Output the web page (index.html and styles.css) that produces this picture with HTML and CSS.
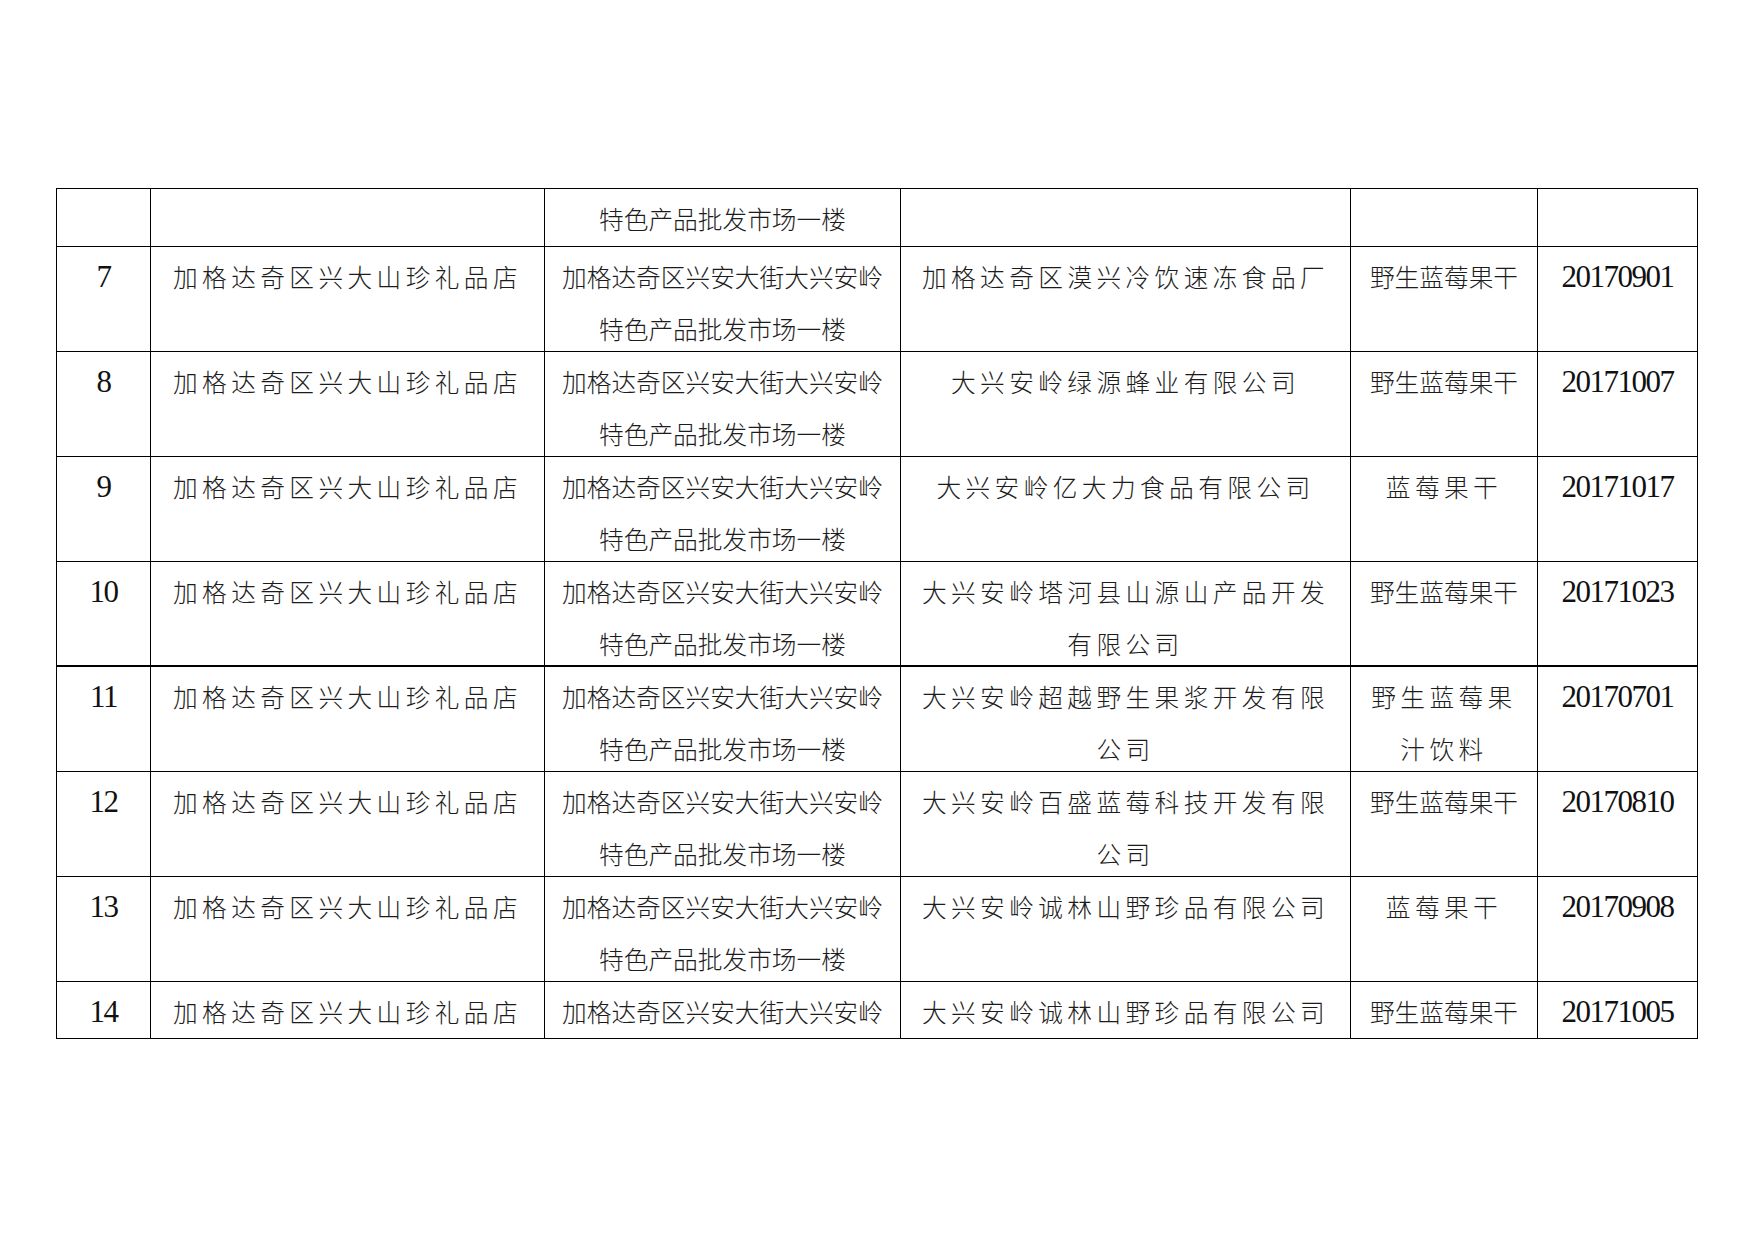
FILE: index.html
```html
<!DOCTYPE html>
<html lang="zh-CN">
<head>
<meta charset="utf-8">
<title>抽检信息表</title>
<link rel="stylesheet" href="styles.css">
</head>
<body>
<div class="page">
<div class="grid">
  <div class="cell num"></div>
  <div class="cell sp"></div>
  <div class="cell">特色产品批发市场一楼</div>
  <div class="cell sp"></div>
  <div class="cell"></div>
  <div class="cell num"></div>

  <div class="cell num">7</div>
  <div class="cell sp">加格达奇区兴大山珍礼品店</div>
  <div class="cell">加格达奇区兴安大街大兴安岭<br>特色产品批发市场一楼</div>
  <div class="cell sp">加格达奇区漠兴冷饮速冻食品厂</div>
  <div class="cell">野生蓝莓果干</div>
  <div class="cell num">20170901</div>

  <div class="cell num">8</div>
  <div class="cell sp">加格达奇区兴大山珍礼品店</div>
  <div class="cell">加格达奇区兴安大街大兴安岭<br>特色产品批发市场一楼</div>
  <div class="cell sp">大兴安岭绿源蜂业有限公司</div>
  <div class="cell">野生蓝莓果干</div>
  <div class="cell num">20171007</div>

  <div class="cell num">9</div>
  <div class="cell sp">加格达奇区兴大山珍礼品店</div>
  <div class="cell">加格达奇区兴安大街大兴安岭<br>特色产品批发市场一楼</div>
  <div class="cell sp">大兴安岭亿大力食品有限公司</div>
  <div class="cell sp">蓝莓果干</div>
  <div class="cell num">20171017</div>

  <div class="cell num thick">10</div>
  <div class="cell sp thick">加格达奇区兴大山珍礼品店</div>
  <div class="cell thick">加格达奇区兴安大街大兴安岭<br>特色产品批发市场一楼</div>
  <div class="cell sp thick">大兴安岭塔河县山源山产品开发<br>有限公司</div>
  <div class="cell thick">野生蓝莓果干</div>
  <div class="cell num thick">20171023</div>

  <div class="cell num">11</div>
  <div class="cell sp">加格达奇区兴大山珍礼品店</div>
  <div class="cell">加格达奇区兴安大街大兴安岭<br>特色产品批发市场一楼</div>
  <div class="cell sp">大兴安岭超越野生果浆开发有限<br>公司</div>
  <div class="cell sp">野生蓝莓果<br>汁饮料</div>
  <div class="cell num">20170701</div>

  <div class="cell num">12</div>
  <div class="cell sp">加格达奇区兴大山珍礼品店</div>
  <div class="cell">加格达奇区兴安大街大兴安岭<br>特色产品批发市场一楼</div>
  <div class="cell sp">大兴安岭百盛蓝莓科技开发有限<br>公司</div>
  <div class="cell">野生蓝莓果干</div>
  <div class="cell num">20170810</div>

  <div class="cell num">13</div>
  <div class="cell sp">加格达奇区兴大山珍礼品店</div>
  <div class="cell">加格达奇区兴安大街大兴安岭<br>特色产品批发市场一楼</div>
  <div class="cell sp">大兴安岭诚林山野珍品有限公司</div>
  <div class="cell sp">蓝莓果干</div>
  <div class="cell num">20170908</div>

  <div class="cell num">14</div>
  <div class="cell sp">加格达奇区兴大山珍礼品店</div>
  <div class="cell">加格达奇区兴安大街大兴安岭</div>
  <div class="cell sp">大兴安岭诚林山野珍品有限公司</div>
  <div class="cell">野生蓝莓果干</div>
  <div class="cell num">20171005</div>
</div>
</div>
</body>
</html>
```
FILE: styles.css
```css
html, body {
  margin: 0;
  padding: 0;
  background: #ffffff;
}
.page {
  padding: 188px 0 0 56px;
}
.grid {
  display: grid;
  width: max-content;
  grid-template-columns: 94px 394px 356px 450px 187px 160px;
  grid-template-rows: 58px repeat(7, 105px) 57px;
  border-top: 1px solid #000;
  border-left: 1px solid #000;
  font-family: "Noto Sans CJK SC", "Noto Sans CJK JP", sans-serif;
  font-weight: 300;
  font-size: 24.7px;
  color: #1c1c1c;
}
.cell {
  box-sizing: border-box;
  border-right: 1px solid #000;
  border-bottom: 1px solid #000;
  padding-top: 3px;
  text-align: center;
  line-height: 52px;
  white-space: nowrap;
  overflow: visible;
}
.cell.sp {
  letter-spacing: 4.4px;
}
.cell.num {
  padding-top: 4px;
  font-family: "Liberation Serif", "Times New Roman", serif;
  font-weight: 400;
  font-size: 31px;
  letter-spacing: -1.5px;
  color: #111;
}
.cell.thick {
  border-bottom: 2px solid #000;
}
```
